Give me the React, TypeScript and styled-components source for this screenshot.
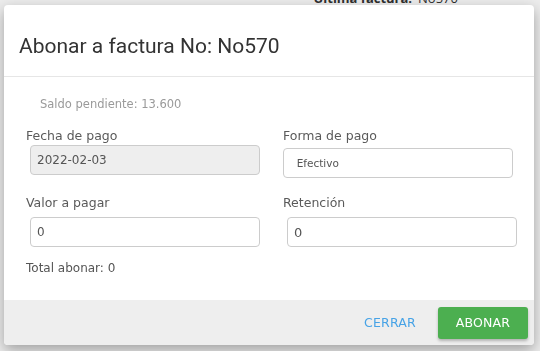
import * as React from 'react';
import styled, { createGlobalStyle } from 'styled-components';

const GlobalStyle = createGlobalStyle`
  html, body {
    margin: 0;
    padding: 0;
    width: 540px;
    height: 351px;
    overflow: hidden;
    background: #ffffff;
    font-family: 'DejaVu Sans', 'Liberation Sans', sans-serif;
  }
`;

// página que queda detrás del modal
const Page = styled.div`
  width: 540px;
  height: 351px;
  background: #ffffff;
`;

const PageHeader = styled.div`
  display: flex;
  justify-content: flex-end;
  padding-right: 82px;
  margin-top: -10px;
  font-family: 'Open Sans', sans-serif;
  font-size: 13px;
  line-height: 16px;
  color: #333;
  b {
    margin-right: 6px;
  }
`;

const Backdrop = styled.div`
  position: fixed;
  inset: 0;
  background: rgba(0, 0, 0, 0.08);
`;

const Modal = styled.div`
  position: fixed;
  left: 4px;
  top: 5px;
  width: 530px;
  height: 340px;
  display: flex;
  flex-direction: column;
  background: #ffffff;
  border-radius: 4px;
  overflow: hidden;
  box-shadow: 0 5px 14px rgba(0, 0, 0, 0.32);
`;

const Header = styled.div`
  box-sizing: border-box;
  height: 72px;
  padding: 10px 15px 0;
  display: flex;
  align-items: center;
  border-bottom: 1px solid #e6e6e6;
`;

const Title = styled.h2`
  margin: 0;
  font-family: Roboto, sans-serif;
  font-weight: 400;
  font-size: 21px;
  color: #333;
`;

const Body = styled.div`
  flex: 1;
  padding: 19px 0 0 22px;
`;

const Saldo = styled.div`
  margin-left: 14px;
  font-size: 11.5px;
  line-height: 16px;
  color: #9a9a9a;
`;

const Grid = styled.div`
  display: grid;
  grid-template-columns: 257px 234px;
  row-gap: 17px;
  margin-top: 16px;
`;

const Field = styled.div`
  display: flex;
  flex-direction: column;
`;

const Label = styled.label`
  font-size: 12.5px;
  line-height: 16px;
  color: #5a5a5a;
`;

const Input = styled.div<{ $indent?: number; $top?: number; $disabled?: boolean; $size?: number }>`
  box-sizing: border-box;
  width: 230px;
  height: 30px;
  margin-left: ${(p) => p.$indent ?? 0}px;
  margin-top: ${(p) => p.$top ?? 0}px;
  padding: 0 6px;
  display: flex;
  align-items: center;
  background: ${(p) => (p.$disabled ? '#eeeeee' : '#ffffff')};
  border: 1px solid #cccccc;
  border-radius: 4px;
  font-size: ${(p) => p.$size ?? 12}px;
  color: #555;
`;

const Total = styled.div`
  margin-top: 13px;
  font-size: 12px;
  line-height: 16px;
  color: #555;
`;

const Footer = styled.div`
  height: 45px;
  background: #eeeeee;
  display: flex;
  align-items: center;
  justify-content: flex-end;
  gap: 22px;
  padding-right: 6px;
`;

const Button = styled.button<{ $primary?: boolean }>`
  height: 32px;
  padding: 0;
  width: ${(p) => (p.$primary ? '90px' : 'auto')};
  border: none;
  border-radius: 3px;
  font-family: 'DejaVu Sans', sans-serif;
  font-size: 12.5px;
  letter-spacing: 0.2px;
  cursor: pointer;
  background: ${(p) => (p.$primary ? '#4caf50' : 'transparent')};
  color: ${(p) => (p.$primary ? '#ffffff' : '#47a3e6')};
  box-shadow: ${(p) => (p.$primary ? '0 2px 3px rgba(0,0,0,0.25)' : 'none')};
`;

function App() {
  return (
    <>
      <GlobalStyle />
      <Page>
        <PageHeader>
          <b>Última factura:</b> No570
        </PageHeader>
      </Page>
      <Backdrop />
      <Modal>
        <Header>
          <Title>Abonar a factura No: No570</Title>
        </Header>
        <Body>
          <Saldo>Saldo pendiente: 13.600</Saldo>
          <Grid>
            <Field>
              <Label>Fecha de pago</Label>
              <Input $indent={4} $top={1} $disabled>
                2022-02-03
              </Input>
            </Field>
            <Field>
              <Label>Forma de pago</Label>
              <Input $top={4} $size={10.5}>
                &nbsp;&nbsp;Efectivo
              </Input>
            </Field>
            <Field>
              <Label>Valor a pagar</Label>
              <Input $indent={4} $top={6}>
                0
              </Input>
            </Field>
            <Field>
              <Label>Retención</Label>
              <Input $indent={4} $top={6} $size={13}>
                0
              </Input>
            </Field>
          </Grid>
          <Total>Total abonar: 0</Total>
        </Body>
        <Footer>
          <Button>CERRAR</Button>
          <Button $primary>ABONAR</Button>
        </Footer>
      </Modal>
    </>
  );
}

export default App;
